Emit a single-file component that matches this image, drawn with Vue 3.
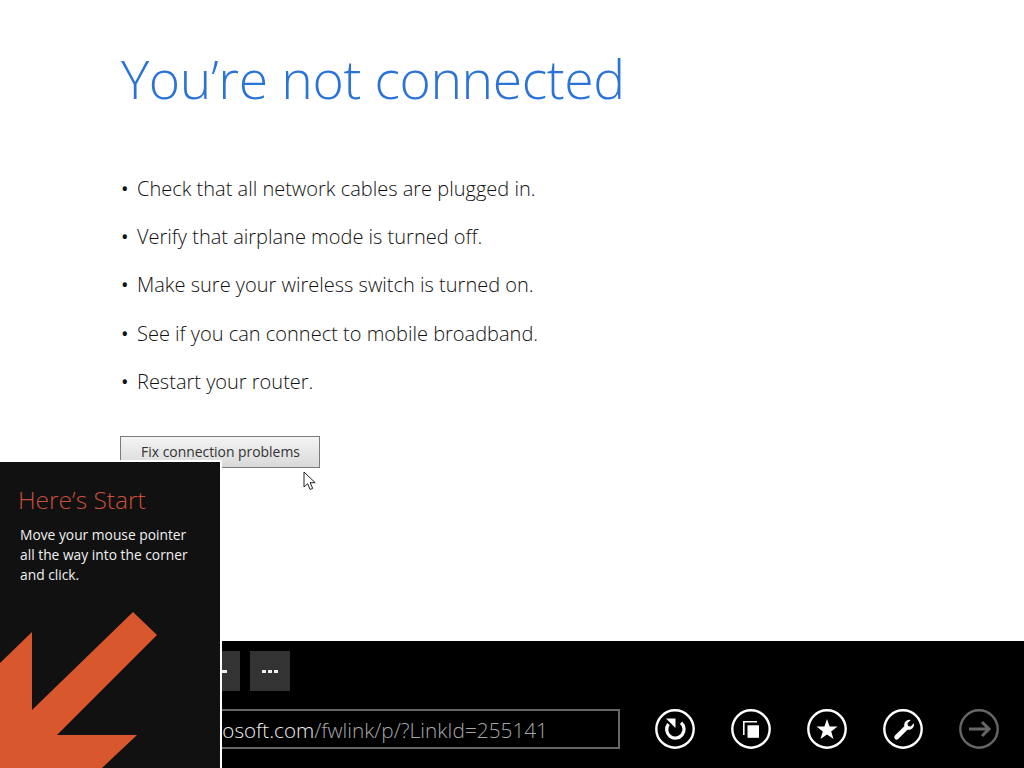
<script setup>
const items = [
  'Check that all network cables are plugged in.',
  'Verify that airplane mode is turned off.',
  'Make sure your wireless switch is turned on.',
  'See if you can connect to mobile broadband.',
  'Restart your router.'
]
</script>

<template>
  <div class="page">
    <main class="main">
      <h1 class="title">You’re not connected</h1>
      <ul class="list">
        <li v-for="item in items" :key="item" class="item"><span class="dot">•</span><span>{{ item }}</span></li>
      </ul>
      <button class="fix">Fix connection problems</button>
    </main>

    <footer class="bar">
      <div class="tiles">
        <div class="tile"><span class="dash"></span></div>
        <div class="tile"><span class="dots"><i></i><i></i><i></i></span></div>
      </div>
      <div class="address">
        <div class="url"><span class="host">go.microsoft.com</span><span class="path">/fwlink/p/?LinkId=255141</span></div>
        <div class="actions">
          <svg class="action" viewBox="0 0 40 40"><circle cx="20" cy="20" r="18.7" class="ring"/><path d="M13.5 15A8.7 8.7 0 1 0 26 13.7" class="stroke"/><path d="M11 9.5h9.5v9.5z" class="fill"/></svg>
          <svg class="action" viewBox="0 0 40 40"><circle cx="20" cy="20" r="18.7" class="ring"/><path d="M12.8 26V12.8H26" class="thin"/><rect x="16.5" y="16.3" width="11.5" height="12.5" class="fill"/></svg>
          <svg class="action" viewBox="0 0 40 40"><circle cx="20" cy="20" r="18.7" class="ring"/><path d="M20 10l2.6 7.4 7.9.2-6.3 4.8 2.3 7.5-6.5-4.5-6.5 4.5 2.3-7.5-6.3-4.8 7.9-.2z" class="fill"/></svg>
          <svg class="action" viewBox="0 0 40 40"><circle cx="20" cy="20" r="18.7" class="ring"/><path transform="translate(3 2.6) scale(.85)" d="M10.5 28.2l11-11a6.3 6.3 0 0 1 7.6-7.4l-3.8 3.8.6 3.2 3.2.7 3.7-3.7a6.3 6.3 0 0 1-7.6 7.5l-10.8 10.8a2.3 2.3 0 0 1-3.9-3.9z" class="fill"/></svg>
          <svg class="action off" viewBox="0 0 40 40"><circle cx="20" cy="20" r="18.7" class="ring"/><path d="M10 20H30M23 13l7 7-7 7" class="arrow"/></svg>
        </div>
      </div>
    </footer>

    <aside class="tip">
      <h2 class="tip-title">Here’s Start</h2>
      <p class="tip-text">Move your mouse pointer all the way into the corner and click.</p>
      <svg class="tip-arrow" viewBox="0 0 220 156"><path d="M133 0L157 23 57 123H137L102 156H0V51L32 20V98z"/></svg>
    </aside>

    <svg class="cursor" viewBox="0 0 14 20"><path d="M1 1v15l3.6-3.3 2.5 5.8 2.6-1.1-2.5-5.7h5z"/></svg>
  </div>
</template>

<style>
html, body { margin: 0; background: #fff; }
</style>

<style scoped>
.page {
  position: relative;
  width: 1024px;
  height: 768px;
  overflow: hidden;
  display: flex;
  flex-direction: column;
  background: #fff;
  font-family: "Open Sans", "Liberation Sans", sans-serif;
}
.main { flex: 1; padding: 0 0 0 120px; box-sizing: border-box; }
.title {
  margin: 0;
  padding: 39px 0 0 1px;
  font-size: 53.5px;
  line-height: 80px;
  font-weight: 300;
  color: #2a73d9;
  letter-spacing: -0.4px;
}
.list { list-style: none; margin: 45px 0 0; padding: 0; }
.item {
  display: flex;
  height: 48.3px;
  align-items: center;
  font-size: 20px;
  font-weight: 300;
  color: #111;
}
.dot { width: 17px; padding-left: 1px; box-sizing: border-box; font-weight: 400; }
.fix {
  display: block;
  width: 200px;
  height: 32px;
  margin-top: 30.5px;
  padding: 0 0 0 1px;
  border: 1px solid #7b7b7b;
  background: linear-gradient(#f4f4f4, #d9d9d9);
  font-family: inherit;
  font-size: 13.9px;
  color: #333;
}
.bar {
  height: 127px;
  flex: none;
  background: #000;
  box-sizing: border-box;
  padding-top: 10px;
}
.tiles { display: flex; gap: 10px; padding-left: 200px; }
.tile {
  width: 40px;
  height: 40px;
  background: #333;
  display: flex;
  align-items: center;
  justify-content: center;
}
.dash { width: 12px; height: 3px; background: #eee; margin-left: 2px; }
.dots { display: flex; gap: 2px; }
.dots i { width: 4px; height: 3px; background: #eee; }
.address { display: flex; align-items: center; margin-top: 18px; }
.url {
  width: 620px;
  height: 40px;
  flex: none;
  box-sizing: border-box;
  border: 2px solid #666;
  font-size: 20.6px;
  line-height: 38px;
  text-align: right;
  padding-right: 70px;
  white-space: nowrap;
  overflow: hidden;
  font-weight: 300;
}
.host { color: #ededed; font-weight: 300; }
.path { color: #a8a8a8; font-size: 20.8px; }
.actions { display: flex; gap: 36px; padding-left: 35px; }
.action { width: 40px; height: 40px; display: block; color: #fff; }
.action.off { color: #666; }
.ring { fill: none; stroke: currentColor; stroke-width: 2.4; }
.stroke { fill: none; stroke: currentColor; stroke-width: 3.2; }
.arrow { fill: none; stroke: currentColor; stroke-width: 3; }
.thin { fill: none; stroke: currentColor; stroke-width: 1.6; }
.fill { fill: currentColor; }
.tip {
  position: absolute;
  left: 0;
  bottom: 0;
  width: 222px;
  height: 308px;
  box-sizing: border-box;
  background: #111;
  border-top: 2px solid #fff;
  border-right: 2px solid #fff;
  padding: 22px 20px 0;
  overflow: hidden;
}
.tip-title {
  margin: 0 0 0 -2px;
  font-size: 24.5px;
  line-height: 32px;
  font-weight: 300;
  color: #c8503a;
}
.tip-text {
  margin: 9px 0 0;
  font-size: 13.8px;
  line-height: 20px;
  color: #f0f0f0;
  font-weight: 400;
}
.tip-arrow {
  position: absolute;
  left: 0;
  bottom: 0;
  width: 220px;
  height: 156px;
}
.tip-arrow path { fill: #d9572c; }
.cursor {
  position: absolute;
  left: 303px;
  top: 471px;
  width: 14px;
  height: 20px;
}
.cursor path { fill: #fff; stroke: #222; stroke-width: 1; }
</style>
